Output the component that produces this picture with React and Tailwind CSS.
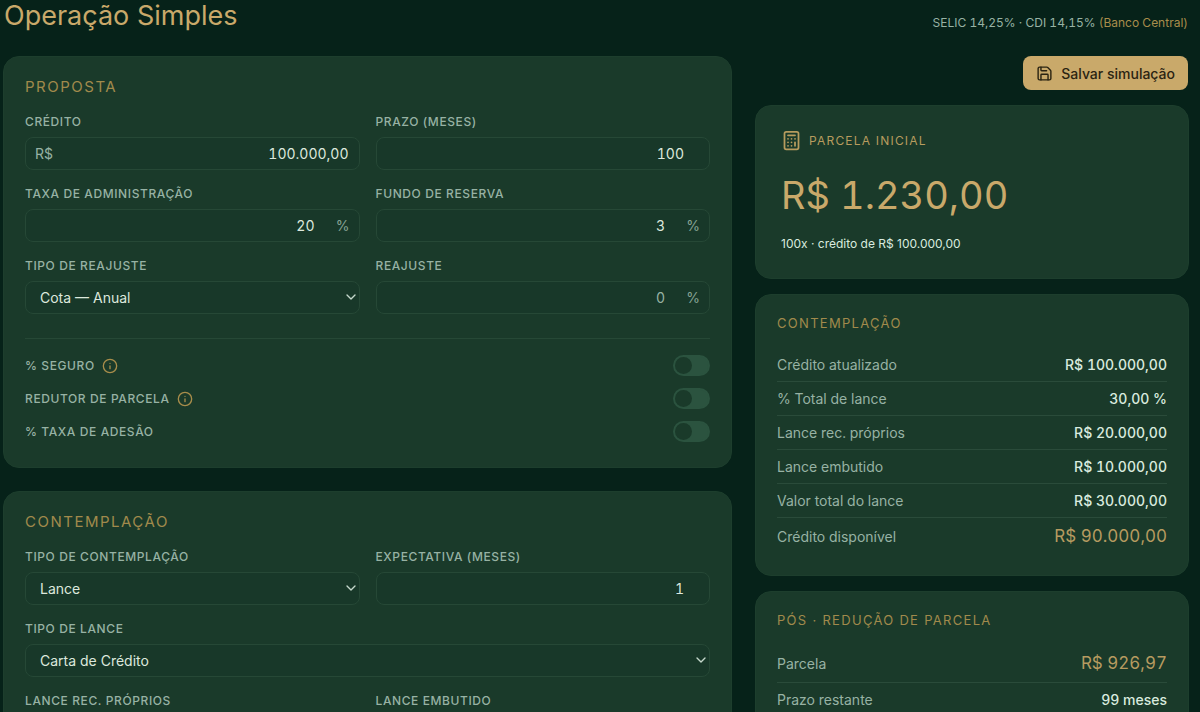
import { useState } from 'react'
import { Calculator, ChevronDown, Info, Save } from 'lucide-react'

const CARD = 'rounded-2xl border border-[#1d3e2d] bg-[#1a3a2a]'
const BOX = 'h-[33px] w-full rounded-lg border border-[#264836] bg-[#183829] text-[14px]'
const LABEL = 'text-[12px] leading-4 font-medium uppercase tracking-wider text-[#97b2a4]'

function Title({ children }) {
  return <h2 className="mb-[17px] text-[15px] leading-5 tracking-widest text-[#a18a4c] uppercase">{children}</h2>
}

function SideTitle({ children }) {
  return <h2 className="mb-[15px] text-[13px] leading-5 tracking-widest text-[#a18a4c] uppercase">{children}</h2>
}

function Field({ id, label, wide, children }) {
  return (
    <div className={wide ? 'col-span-2 flex flex-col gap-[7px]' : 'flex min-w-0 flex-col gap-[7px]'}>
      <label htmlFor={id} className={LABEL}>{label}</label>
      <div className="relative">{children}</div>
    </div>
  )
}

function NumberField({ id, label, value, prefix, suffix, muted }) {
  const pad = prefix ? 'pr-[10px]' : suffix ? 'pr-[44px]' : 'pr-[25px]'
  return (
    <Field id={id} label={label}>
      {prefix && <span className="absolute top-0 left-[10px] text-[14px] leading-[33px] text-[#97b2a4]">{prefix}</span>}
      <input
        id={id}
        type="text"
        inputMode="decimal"
        defaultValue={value}
        className={`${BOX} ${pad} text-right tabular-nums outline-none ${muted ? 'text-[#97b2a4]' : 'text-[#dde8dd]'}`}
      />
      {suffix && <span className="absolute top-0 right-[10px] text-[14px] leading-[33px] text-[#86a394]">{suffix}</span>}
    </Field>
  )
}

function SelectField({ id, label, options, wide }) {
  return (
    <Field id={id} label={label} wide={wide}>
      <select id={id} className={`${BOX} appearance-none px-[14px] text-[#dde8dd] outline-none`}>
        {options.map(o => <option key={o}>{o}</option>)}
      </select>
      <ChevronDown size={16} className="pointer-events-none absolute top-2 right-px text-[#c5d8cc]" />
    </Field>
  )
}

function Toggle({ id, label, info }) {
  const [on, setOn] = useState(false)
  return (
    <div className="flex h-[21px] items-center justify-between">
      <div className="flex items-center gap-[7px]">
        <label htmlFor={id} className={LABEL}>{label}</label>
        {info && <Info size={16} className="text-[#a88d4b]" />}
      </div>
      <input
        id={id}
        type="checkbox"
        role="switch"
        checked={on}
        onChange={e => setOn(e.target.checked)}
        className="h-[21px] w-[37px] appearance-none rounded-full border-2 border-[#2b533f] bg-[#2b533f] before:block before:size-[17px] before:rounded-full before:bg-[#1a3a2a] checked:bg-[#c9a96a] checked:before:translate-x-4"
      />
    </div>
  )
}

function Rows({ items }) {
  return (
    <table className="w-full text-[14px] leading-[21px] tabular-nums">
      <tbody>
        {items.map(r => (
          <tr key={r.label} className="border-b border-[#2a4b3a] last:border-b-0">
            <th scope="row" className={`${r.gold ? 'py-2' : 'py-[6px]'} text-left font-normal text-[#97b2a4]`}>{r.label}</th>
            <td className={r.gold ? 'py-2 text-right text-[17px] text-[#b69b60]' : 'py-[6px] text-right font-medium text-[#d9ebdf]'}>{r.value}</td>
          </tr>
        ))}
      </tbody>
    </table>
  )
}

const contemplacao = [
  { label: 'Crédito atualizado', value: 'R$ 100.000,00' },
  { label: '% Total de lance', value: '30,00 %' },
  { label: 'Lance rec. próprios', value: 'R$ 20.000,00' },
  { label: 'Lance embutido', value: 'R$ 10.000,00' },
  { label: 'Valor total do lance', value: 'R$ 30.000,00' },
  { label: 'Crédito disponível', value: 'R$ 90.000,00', gold: true },
]

const reducao = [
  { label: 'Parcela', value: 'R$ 926,97', gold: true },
  { label: 'Prazo restante', value: '99 meses' },
]

export default function App() {
  return (
    <div className="h-screen overflow-hidden bg-[#062219] pr-[11px] pl-[3px] font-['Inter',sans-serif]">
      <header className="mb-6 flex items-end justify-between px-px">
        <h1 className="text-[27px] leading-8 text-[#c9a96a]">Operação Simples</h1>
        <p className="text-[12px] leading-[18px] tabular-nums text-[#97b2a4]">
          SELIC 14,25% · CDI 14,15% <span className="text-[#a88d4b]">(Banco Central)</span>
        </p>
      </header>

      <main className="grid grid-cols-[minmax(0,1fr)_434px] items-start gap-[23px]">
        <div className="flex flex-col gap-[23px]">
          <section className={`${CARD} px-[21px] pt-5 pb-[25px]`}>
            <Title>Proposta</Title>
            <div className="grid grid-cols-2 gap-4">
              <NumberField id="credito" label="Crédito" value="100.000,00" prefix="R$" />
              <NumberField id="prazo" label="Prazo (meses)" value="100" />
              <NumberField id="taxa" label="Taxa de administração" value="20" suffix="%" />
              <NumberField id="fundo" label="Fundo de reserva" value="3" suffix="%" />
              <SelectField id="tipo-reajuste" label="Tipo de reajuste" options={['Cota — Anual', 'Cota — Mensal']} />
              <NumberField id="reajuste" label="Reajuste" value="0" suffix="%" muted />
            </div>
            <div className="mt-6 flex flex-col gap-3 border-t border-[#264836] pt-4">
              <Toggle id="seguro" label="% Seguro" info />
              <Toggle id="redutor" label="Redutor de parcela" info />
              <Toggle id="adesao" label="% Taxa de adesão" />
            </div>
          </section>

          <section className={`${CARD} px-[21px] pt-5 pb-[25px]`}>
            <Title>Contemplação</Title>
            <div className="grid grid-cols-2 gap-4">
              <SelectField id="tipo-contemplacao" label="Tipo de contemplação" options={['Lance', 'Sorteio']} />
              <NumberField id="expectativa" label="Expectativa (meses)" value="1" />
              <SelectField id="tipo-lance" label="Tipo de lance" options={['Carta de Crédito', 'Parcela']} wide />
              <NumberField id="lance-proprio" label="Lance rec. próprios" value="20" />
              <NumberField id="lance-embutido" label="Lance embutido" value="10" />
            </div>
          </section>
        </div>

        <aside className="flex flex-col gap-[15px]">
          <button type="button" className="mr-px flex h-[34px] items-center gap-2 self-end rounded-lg bg-[#c9a96a] px-[13px] text-[14px] font-medium text-[#2b2412]">
            <Save size={17} />
            Salvar simulação
          </button>

          <section className={`${CARD} px-[25px] py-6`}>
            <h2 className="flex items-center gap-[7px] text-[12px] leading-5 tracking-widest text-[#b79c5e] uppercase">
              <Calculator size={21} />
              Parcela inicial
            </h2>
            <p className="mt-5 mb-[15px] text-[38px] leading-12 tabular-nums text-[#c9a96a]">R$ 1.230,00</p>
            <p className="text-[12px] leading-5 text-[#d9ebdf]">100x · crédito de R$ 100.000,00</p>
          </section>

          <section className={`${CARD} px-[21px] pt-[18px] pb-5`}>
            <SideTitle>Contemplação</SideTitle>
            <Rows items={contemplacao} />
          </section>

          <section className={`${CARD} px-[21px] pt-[18px] pb-5`}>
            <SideTitle>Pós · redução de parcela</SideTitle>
            <Rows items={reducao} />
          </section>
        </aside>
      </main>
    </div>
  )
}
